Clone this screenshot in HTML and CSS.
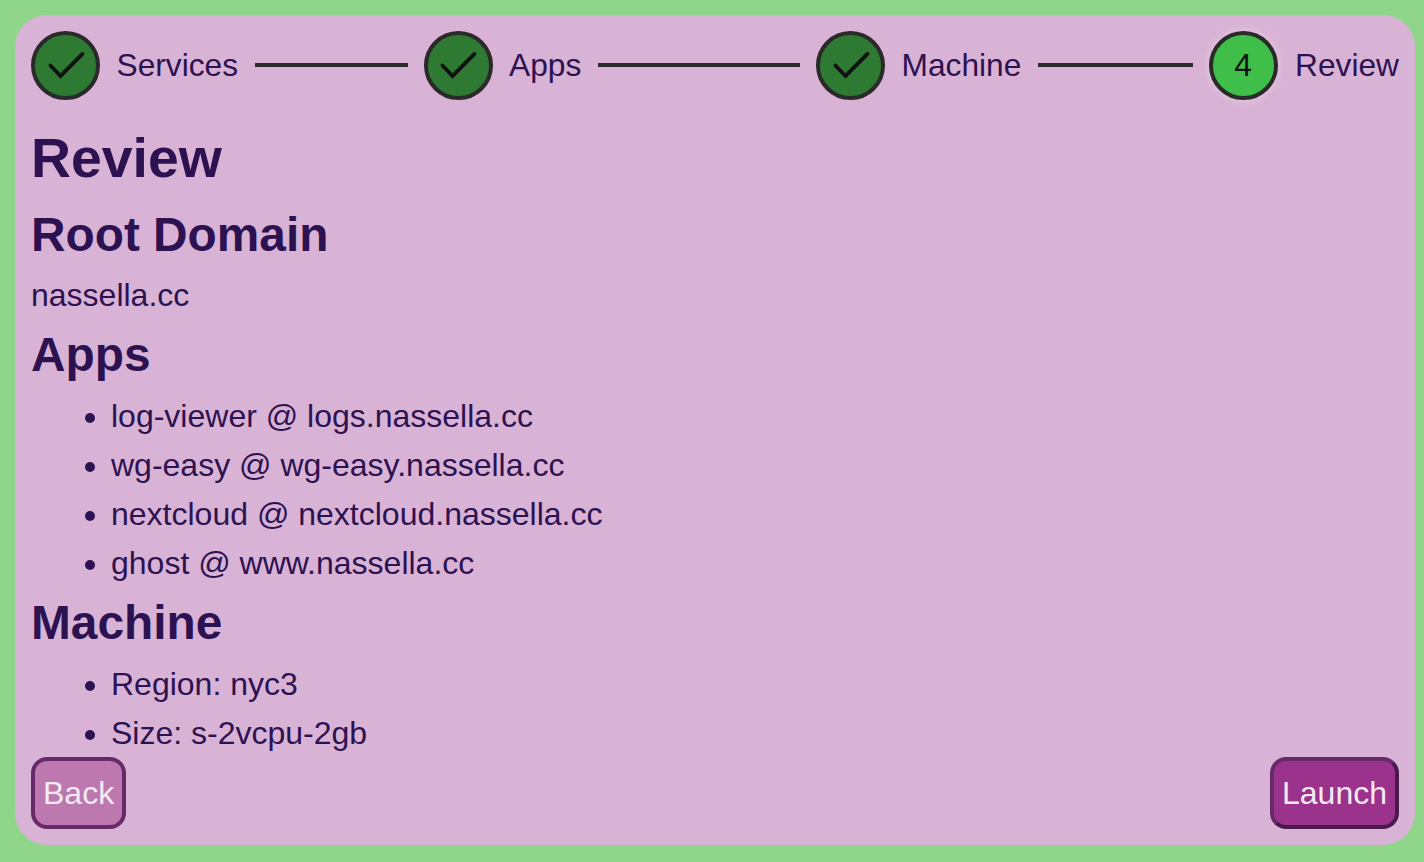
FILE: index.html
```html
<!DOCTYPE html>
<html lang="en">

<head>
    <meta charset="UTF-8">
    <meta name="viewport" content="width=device-width, initial-scale=1.0">
    <title>Review</title>
    <link rel="stylesheet" href="styles.css">
</head>

<body>
<div class="wizard">

  <!-- the steps -->
  <div class="stepper">
    <div class="step">
      <div class="step-circle is-done">
        <svg viewBox="0 0 24 24" width="42" height="42"><path d="M3.1 11.7 L8.9 17.7 L21.4 5.1" /></svg>
      </div>
      <span class="step-label">Services</span>
      <div class="step-line"></div>
    </div>
    <div class="step">
      <div class="step-circle is-done">
        <svg viewBox="0 0 24 24" width="42" height="42"><path d="M3.1 11.7 L8.9 17.7 L21.4 5.1" /></svg>
      </div>
      <span class="step-label">Apps</span>
      <div class="step-line"></div>
    </div>
    <div class="step">
      <div class="step-circle is-done">
        <svg viewBox="0 0 24 24" width="42" height="42"><path d="M3.1 11.7 L8.9 17.7 L21.4 5.1" /></svg>
      </div>
      <span class="step-label">Machine</span>
      <div class="step-line"></div>
    </div>
    <div class="step is-last">
      <div class="step-circle is-active">4</div>
      <span class="step-label">Review</span>
    </div>
  </div>

  <!-- the summary -->
  <div class="review">
    <h1>Review</h1>
    <h2>Root Domain</h2>
    <p>nassella.cc</p>
    <h2>Apps</h2>
    <ul>
      <li>log-viewer @ logs.nassella.cc</li>
      <li>wg-easy @ wg-easy.nassella.cc</li>
      <li>nextcloud @ nextcloud.nassella.cc</li>
      <li>ghost @ www.nassella.cc</li>
    </ul>
    <h2>Machine</h2>
    <ul>
      <li>Region: nyc3</li>
      <li>Size: s-2vcpu-2gb</li>
    </ul>
  </div>

  <!-- the buttons -->
  <div class="actions">
    <button type="button" class="btn is-back">Back</button>
    <button type="button" class="btn is-launch">Launch</button>
  </div>

</div>
</body>

</html>
```

FILE: styles.css
```css
* {
  box-sizing: border-box;
}

body {
  margin: 0;
  height: 100vh;
  padding: 15px 9px 17px 15px;
  background: #8fd68a;
  color: #2d1252;
  font-family: "Liberation Sans", Arial, sans-serif;
  font-size: 32px;
}

.wizard {
  height: 100%;
  padding: 16px;
  display: flex;
  flex-direction: column;
  background: #d9b3d5;
  border-radius: 32px;
}

/* steps row, every step but the last shares the width */
.stepper {
  display: flex;
  align-items: center;
  flex-shrink: 0;
}

.step {
  flex: 1;
  display: flex;
  align-items: center;
}

.step.is-last {
  flex: none;
}

.step-circle {
  width: 69px;
  height: 69px;
  display: flex;
  align-items: center;
  justify-content: center;
  flex-shrink: 0;
  border: 4px solid #2a2a2a;
  border-radius: 50%;
  color: #111;
  font-size: 31.7px;
}

.step-circle svg {
  fill: none;
  stroke: #111;
  stroke-width: 2.2;
  stroke-linecap: round;
  stroke-linejoin: miter;
}

.step-circle.is-done {
  background: #2f7a33;
}

.step-circle.is-active {
  background: #3fbf4a;
  box-shadow: 0 0 8px rgba(255, 255, 255, 0.35);
}

.step-label {
  margin-left: 16.5px;
  font-size: 31.7px;
  line-height: 37px;
}

.step.is-last .step-label {
  margin-left: 17.5px;
}

.step-line {
  flex: 1;
  height: 4px;
  margin: 0 16px 1px 17px;
  background: #2a2a2a;
}

/* summary fills what is left and clips */
.review {
  flex: 1;
  min-height: 0;
  overflow: hidden;
}

h1 {
  margin: 26px 0 18px;
  font-size: 55.4px;
  line-height: 64px;
}

h2 {
  margin: 0;
  font-size: 47.8px;
  line-height: 54px;
}

p {
  margin: 15px 0 14px;
  line-height: 37px;
}

ul {
  margin: 16px 0 14px;
  padding-left: 80px;
}

li {
  line-height: 37px;
  margin-bottom: 12px;
}

.actions {
  display: flex;
  justify-content: space-between;
  flex-shrink: 0;
}

.btn {
  height: 72px;
  padding: 0 8px;
  border: 4px solid #662a68;
  border-radius: 16px;
  color: #f3eaf3;
  font-family: inherit;
  font-size: 32px;
  cursor: pointer;
}

.btn.is-back {
  background: #bd78b0;
}

.btn.is-launch {
  background: #9b328c;
  border-right-color: #4a1a4e;
  border-bottom-color: #4a1a4e;
}
```
